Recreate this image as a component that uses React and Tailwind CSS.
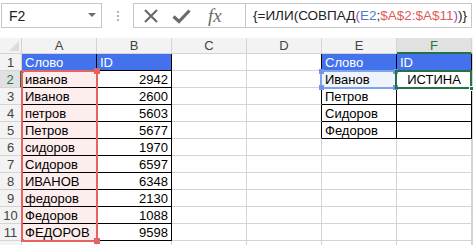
import React from "react";

const COLS = ["A", "B", "C", "D", "E", "F"];

const words = ["иванов", "Иванов", "петров", "Петров", "сидоров", "Сидоров", "ИВАНОВ", "федоров", "Федоров", "ФЕДОРОВ"];
const nums = ["2942", "2600", "5603", "5677", "1970", "6597", "6348", "2130", "1088", "9598"];
const eWords = ["Иванов", "Петров", "Сидоров", "Федоров"];

function cellInfo(r, c) {
  let text = "";
  let align = "left";
  let blue = false;
  let fill = "";
  if (r === 1 && (c === 0 || c === 4)) { text = "Слово"; blue = true; }
  if (r === 1 && (c === 1 || c === 5)) { text = "ID"; blue = true; }
  if (r >= 2 && r <= 11 && c === 0) { text = words[r - 2]; fill = "pink"; }
  if (r >= 2 && r <= 11 && c === 1) { text = nums[r - 2]; align = "right"; }
  if (r >= 2 && r <= 5 && c === 4) { text = eWords[r - 2]; }
  if (r === 2 && c === 4) fill = "lblue";
  if (r === 2 && c === 5) { text = "ИСТИНА"; align = "center"; }
  const blackR = (r <= 11 && (c === 0 || c === 1)) || (r <= 5 && (c === 3 || c === 4 || c === 5));
  const blackB = (r <= 11 && (c === 0 || c === 1)) || (r <= 5 && (c === 4 || c === 5));
  return { text, align, blue, fill, blackR, blackB };
}

function Cell({ r, c }) {
  const i = cellInfo(r, c);
  const bg = i.blue ? "bg-[#4372ec] text-white" : i.fill === "pink" ? "bg-[#fdeded] text-black" : i.fill === "lblue" ? "bg-[#eef3fc] text-black" : "bg-white text-black";
  const br = i.blackR ? "border-r-black" : "border-r-[#d4d4d4]";
  const bb = i.blackB ? "border-b-black" : "border-b-[#d4d4d4]";
  const al = i.align === "right" ? "justify-end pr-[3px]" : i.align === "center" ? "justify-center" : "justify-start pl-[3px]";
  return (
    <div className={`flex items-center pt-[1px] border-r border-b ${br} ${bb} ${bg} ${al} overflow-hidden whitespace-nowrap`}>
      {i.text}
    </div>
  );
}

function RowHeader({ r }) {
  const sel = r === 2;
  return (
    <div className={`flex items-center justify-center pt-[1px] border-b border-b-[#d4d4d4] ${sel ? "bg-[#e1e1e1] text-[#217346] border-r-2 border-r-[#217346]" : "bg-[#f3f3f3] text-[#444] border-r border-r-[#d4d4d4]"}`}>
      {r <= 11 ? r : ""}
    </div>
  );
}

function ColHeader({ label }) {
  const sel = label === "F";
  return (
    <div className={`flex items-center justify-center border-r border-r-[#d4d4d4] ${sel ? "bg-[#e1e1e1] text-[#217346] border-b-2 border-b-[#217346]" : "bg-[#f3f3f3] text-[#444] border-b border-b-[#d4d4d4]"}`}>
      {label}
    </div>
  );
}

function Corner({ className }) {
  return <div className={`absolute ${className}`} />;
}

export default function App() {
  const rows = Array.from({ length: 12 }, (_, k) => k + 1);
  return (
    <div className="relative w-[473px] h-[245px] overflow-hidden bg-white text-[13px] leading-none" style={{ fontFamily: '"Liberation Sans", Arial, sans-serif' }}>
      {/* Formula bar */}
      <div className="flex items-center h-[30px] pt-[1px]">
        <div className="ml-[1px] w-[101px] h-[25px] border border-[#c6c6c6] flex items-center pl-[7px] pr-[5px] justify-between text-[#222] text-[14px]">
          <span>F2</span>
          <svg width="8" height="5" viewBox="0 0 8 5"><path d="M0 0 L8 0 L4 4 Z" fill="#6d6d6d" /></svg>
        </div>
        <div className="w-[31px] flex flex-col items-center gap-[2px]">
          <div className="w-[2px] h-[2px] bg-[#b0b0b0]" />
          <div className="w-[2px] h-[2px] bg-[#b0b0b0]" />
          <div className="w-[2px] h-[2px] bg-[#b0b0b0]" />
        </div>
        <div className="flex-1 mr-[1px] h-[25px] border border-[#c6c6c6] flex items-stretch">
          <div className="w-[112px] flex items-center border-r border-r-[#c6c6c6]">
            <svg className="ml-[9px]" width="16" height="16" viewBox="0 0 16 16"><path d="M2 2 L14 14 M14 2 L2 14" stroke="#6b6b6b" strokeWidth="2.2" fill="none" /></svg>
            <svg className="ml-[13px]" width="19" height="16" viewBox="0 0 19 16"><path d="M1.5 8.5 L7 13.5 L17.5 2.5" stroke="#6b6b6b" strokeWidth="3.2" fill="none" /></svg>
            <span className="ml-[17px] text-[#6b6b6b] italic text-[19px]" style={{ fontFamily: '"Liberation Serif", "Times New Roman", serif' }}>fx</span>
          </div>
          <div className="flex items-center pl-[7px] whitespace-nowrap text-[#222] text-[13.5px]">
            <span>{"{=ИЛИ(СОВПАД"}</span>
            <span className="text-[#9b4fa5]">(</span>
            <span className="text-[#4a7ad6]">E2</span>
            <span>;</span>
            <span className="text-[#e05a5a]">$A$2:$A$11</span>
            <span className="text-[#9b4fa5]">)</span>
            <span>{")}"}</span>
          </div>
        </div>
      </div>

      {/* Sheet */}
      <div className="relative mt-[8px]">
        <div className="grid grid-cols-[22px_repeat(6,75px)_1fr] grid-rows-[16px_repeat(12,17px)]">
          <div className="relative bg-[#f3f3f3] border-r border-b border-[#d4d4d4]">
            <svg className="absolute right-[2px] bottom-[2px]" width="10" height="10" viewBox="0 0 10 10"><path d="M10 0 L10 10 L0 10 Z" fill="#dcdcdc" /></svg>
          </div>
          {COLS.map((l) => <ColHeader key={l} label={l} />)}
          <div className="bg-[#f3f3f3] border-b border-b-[#d4d4d4]" />
          {rows.map((r) => (
            <React.Fragment key={r}>
              <RowHeader r={r} />
              {COLS.map((_, c) => <Cell key={c} r={r} c={c} />)}
              <div className="border-b border-b-[#d4d4d4] border-l border-l-[#d4d4d4]" />
            </React.Fragment>
          ))}
        </div>

        {/* Red range highlight A2:A11 */}
        <div className="absolute left-[21px] top-[32px] w-[77px] h-[172px] border-2 border-[#e46464]">
          <Corner className="left-[-2px] top-[-2px] w-[3px] h-[3px] bg-[#e46464]" />
          <Corner className="right-[-4px] top-[-4px] w-[6px] h-[6px] bg-[#e46464]" />
          <Corner className="left-[-2px] bottom-[-2px] w-[3px] h-[3px] bg-[#e46464]" />
          <Corner className="right-[-4px] bottom-[-4px] w-[6px] h-[6px] bg-[#e46464]" />
        </div>

        {/* Blue range highlight E2 */}
        <div className="absolute left-[320px] top-[32px] w-[77px] h-[19px] border-2 border-[#7ea3ea]">
          <Corner className="left-[-3px] top-[-3px] w-[5px] h-[5px] bg-[#6f97e6]" />
          <Corner className="right-[-3px] top-[-3px] w-[5px] h-[5px] bg-[#6f97e6]" />
          <Corner className="left-[-3px] bottom-[-3px] w-[5px] h-[5px] bg-[#6f97e6]" />
          <Corner className="right-[-3px] bottom-[-3px] w-[5px] h-[5px] bg-[#6f97e6]" />
        </div>

        {/* Active cell F2 */}
        <div className="absolute left-[395px] top-[32px] w-[77px] h-[19px] border-2 border-[#217346]">
          <Corner className="right-[-4px] bottom-[-4px] w-[5px] h-[5px] bg-[#217346] border border-white" />
        </div>
      </div>
    </div>
  );
}
